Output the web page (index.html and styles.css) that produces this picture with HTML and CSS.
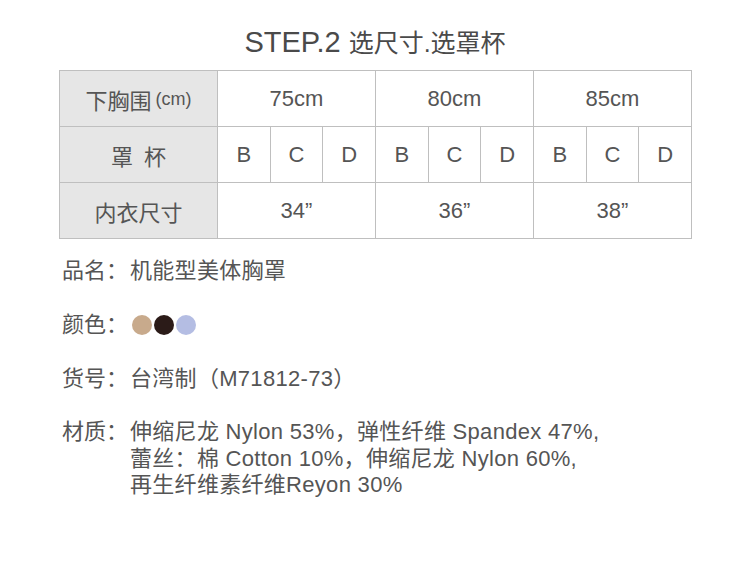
FILE: index.html
```html
<!DOCTYPE html>
<html lang="zh">
<head>
<meta charset="utf-8">
<title>STEP.2 选尺寸.选罩杯</title>
<link rel="stylesheet" href="styles.css">
</head>
<body>
<div class="page">
  <h1 class="title">STEP.2 <span class="title-cjk">选尺寸.选罩杯</span></h1>
  <table class="size-table">
    <colgroup>
      <col class="col-label">
      <col span="9" class="col-cell">
    </colgroup>
    <tr>
      <th class="label">下胸围<sup class="unit">(cm)</sup></th>
      <td colspan="3">75cm</td>
      <td colspan="3">80cm</td>
      <td colspan="3">85cm</td>
    </tr>
    <tr>
      <th class="label">罩&ensp;杯</th>
      <td>B</td><td>C</td><td>D</td>
      <td>B</td><td>C</td><td>D</td>
      <td>B</td><td>C</td><td>D</td>
    </tr>
    <tr>
      <th class="label">内衣尺寸</th>
      <td colspan="3">34”</td>
      <td colspan="3">36”</td>
      <td colspan="3">38”</td>
    </tr>
  </table>
  <dl class="info">
    <div class="info-row">
      <dt>品名：</dt>
      <dd>机能型美体胸罩</dd>
    </div>
    <div class="info-row">
      <dt>颜色：</dt>
      <dd class="swatches">
        <span class="swatch swatch-tan"></span>
        <span class="swatch swatch-black"></span>
        <span class="swatch swatch-blue"></span>
      </dd>
    </div>
    <div class="info-row">
      <dt>货号：</dt>
      <dd>台湾制（M71812-73）</dd>
    </div>
    <div class="info-row">
      <dt>材质：</dt>
      <dd>伸缩尼龙 Nylon 53%，弹性纤维 Spandex 47%,<br>蕾丝：棉 Cotton 10%，伸缩尼龙 Nylon 60%,<br>再生纤维素纤维Reyon 30%</dd>
    </div>
  </dl>
</div>
</body>
</html>
```
FILE: styles.css
```css
html, body {
  margin: 0;
  padding: 0;
  background: #ffffff;
}

body {
  font-family: "Liberation Sans", Arial, "Noto Sans CJK SC", sans-serif;
  color: #555555;
}

.page {
  width: 750px;
  height: 572px;
  padding: 0 0 0 59px;
  box-sizing: border-box;
}

.title {
  margin: 0;
  padding-top: 27px;
  padding-right: 59px;
  font-size: 29px;
  line-height: 30px;
  font-weight: normal;
  text-align: center;
  color: #4a4a4a;
}

.title-cjk {
  font-size: 25px;
}

.size-table {
  border-collapse: collapse;
  table-layout: fixed;
  width: 633px;
  margin-top: 12px;
}

.col-label {
  width: 158px;
}

.size-table th,
.size-table td {
  border: 1px solid #bfbfbf;
  height: 55px;
  padding: 0;
  text-align: center;
  vertical-align: middle;
  font-size: 22px;
  font-weight: normal;
  color: #555555;
}

.size-table th.label {
  background: #e6e6e6;
}

.unit {
  font-size: 18px;
  vertical-align: 4px;
  line-height: 0;
  margin-left: 4px;
}

.info {
  margin: 19px 0 0 3px;
  padding: 0;
}

.info-row {
  display: flex;
  align-items: flex-start;
  margin-bottom: 27px;
  font-size: 22px;
  line-height: 26.5px;
  letter-spacing: 0.3px;
}

.info-row dt {
  width: 68px;
  flex: none;
  letter-spacing: 0;
}

.info-row dd {
  margin: 0;
}

.swatches {
  display: flex;
  align-items: center;
  gap: 2px;
  height: 27px;
  padding-left: 2px;
}

.swatch {
  display: block;
  width: 20px;
  height: 20px;
  border-radius: 50%;
}

.swatch-tan {
  background: #c8aa8c;
}

.swatch-black {
  background: #2b1b18;
}

.swatch-blue {
  background: #b4bde3;
}
```
